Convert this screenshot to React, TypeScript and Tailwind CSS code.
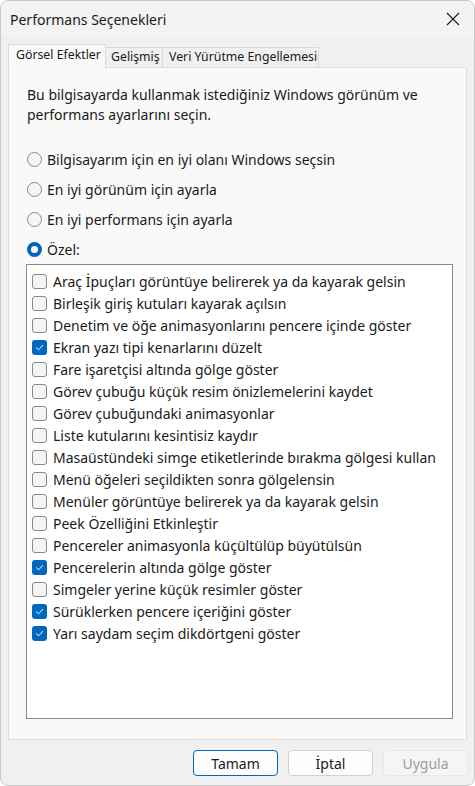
import React from 'react';

const OPTIONS = [
  { label: 'Araç İpuçları görüntüye belirerek ya da kayarak gelsin', on: false },
  { label: 'Birleşik giriş kutuları kayarak açılsın', on: false },
  { label: 'Denetim ve öğe animasyonlarını pencere içinde göster', on: false },
  { label: 'Ekran yazı tipi kenarlarını düzelt', on: true },
  { label: 'Fare işaretçisi altında gölge göster', on: false },
  { label: 'Görev çubuğu küçük resim önizlemelerini kaydet', on: false },
  { label: 'Görev çubuğundaki animasyonlar', on: false },
  { label: 'Liste kutularını kesintisiz kaydır', on: false },
  { label: 'Masaüstündeki simge etiketlerinde bırakma gölgesi kullan', on: false },
  { label: 'Menü öğeleri seçildikten sonra gölgelensin', on: false },
  { label: 'Menüler görüntüye belirerek ya da kayarak gelsin', on: false },
  { label: 'Peek Özelliğini Etkinleştir', on: false },
  { label: 'Pencereler animasyonla küçültülüp büyütülsün', on: false },
  { label: 'Pencerelerin altında gölge göster', on: true },
  { label: 'Simgeler yerine küçük resimler göster', on: false },
  { label: 'Sürüklerken pencere içeriğini göster', on: true },
  { label: 'Yarı saydam seçim dikdörtgeni göster', on: true },
];

const RADIOS = [
  { label: 'Bilgisayarım için en iyi olanı Windows seçsin', on: false },
  { label: 'En iyi görünüm için ayarla', on: false },
  { label: 'En iyi performans için ayarla', on: false },
  { label: 'Özel:', on: true },
];

const Radio = ({ on }: { on: boolean }) =>
  on ? (
    <span className="w-[15px] h-[15px] rounded-full bg-[#0067c0] flex items-center justify-center shrink-0">
      <span className="w-[7px] h-[7px] rounded-full bg-white" />
    </span>
  ) : (
    <span className="w-[15px] h-[15px] rounded-full border border-[#8a8a8a] bg-[#f5f5f5] shrink-0" />
  );

const Check = ({ on }: { on: boolean }) =>
  on ? (
    <span className="w-[15px] h-[15px] rounded-[3px] bg-[#0067c0] flex items-center justify-center shrink-0">
      <svg width="9" height="9" viewBox="0 0 10 10" fill="none">
        <path d="M1.5 5.2 L4 7.6 L8.6 2.6" stroke="white" strokeWidth="1.1" strokeLinecap="round" strokeLinejoin="round" />
      </svg>
    </span>
  ) : (
    <span className="w-[15px] h-[15px] rounded-[3px] border border-[#8a8a8a] bg-[#f5f5f5] shrink-0" />
  );

export default function App() {
  return (
    <div
      className="w-[475px] h-[786px] bg-[#f0f0f0] text-[#1a1a1a] flex flex-col overflow-hidden rounded-lg border border-[#c8c8c8]"
      style={{ fontFamily: '"Noto Sans", "Open Sans", sans-serif' }}
    >
      <div className="h-[36px] shrink-0 bg-[#f3f3f3] flex items-center justify-between pl-[9px] pr-[13px]">
        <span className="text-[14px] text-[#1a1a1a]">Performans Seçenekleri</span>
        <svg width="14" height="14" viewBox="0 0 14 14" className="mr-[1px]">
          <path d="M1 1 L13 13 M13 1 L1 13" stroke="#1a1a1a" strokeWidth="1.1" />
        </svg>
      </div>

      <div className="flex items-end pl-[7px] pt-[7px] text-[12.3px] leading-none whitespace-nowrap">
        <div className="h-[24px] w-[98px] bg-[#f9f9f9] border border-b-0 border-[#d9d9d9] flex items-center pl-[7px] pb-[2px] relative z-10 -mb-px">
          Görsel Efektler
        </div>
        <div className="h-[20px] w-[57px] bg-[#f0f0f0] border border-l-0 border-b-0 border-[#d9d9d9] flex items-center pl-[5px]">
          Gelişmiş
        </div>
        <div className="h-[20px] w-[156px] bg-[#f0f0f0] border border-l-0 border-b-0 border-[#d9d9d9] flex items-center pl-[6px]">
          Veri Yürütme Engellemesi
        </div>
      </div>

      <div className="mx-[7px] h-[673px] bg-[#f9f9f9] border border-[#dedede] px-[17px] pt-[17px] flex flex-col">
        <p className="text-[14px] leading-[20px] text-[#1a1a1a] pl-px">
          Bu bilgisayarda kullanmak istediğiniz Windows görünüm ve
          <br />
          performans ayarlarını seçin.
        </p>

        <div className="mt-[19px] flex flex-col">
          {RADIOS.map((r) => (
            <div key={r.label} className="h-[30px] flex items-center gap-[5px] pl-[1px] text-[14px]">
              <Radio on={r.on} />
              <span>{r.label}</span>
            </div>
          ))}
        </div>

        <div className="h-[455px] w-[427px] bg-white border border-[#8a8a8a] pt-[5px] pl-[5px] flex flex-col">
          {OPTIONS.map((o) => (
            <div key={o.label} className="h-[22px] flex items-center gap-[6px] text-[14px] whitespace-nowrap">
              <Check on={o.on} />
              <span>{o.label}</span>
            </div>
          ))}
        </div>
      </div>

      <div className="flex justify-end gap-[10px] pr-[6px] pt-[10px] text-[14px]">
        <button className="w-[85px] h-[26px] rounded-[4px] border border-[#0067c0] bg-[#fdfdfd] text-[#1a1a1a]">
          Tamam
        </button>
        <button className="w-[85px] h-[26px] rounded-[4px] border border-[#d0d0d0] bg-[#fdfdfd] text-[#1a1a1a]">
          İptal
        </button>
        <button className="w-[85px] h-[26px] rounded-[4px] border border-[#e8e8e8] bg-[#f5f5f5] text-[#9d9d9d]">
          Uygula
        </button>
      </div>
    </div>
  );
}
